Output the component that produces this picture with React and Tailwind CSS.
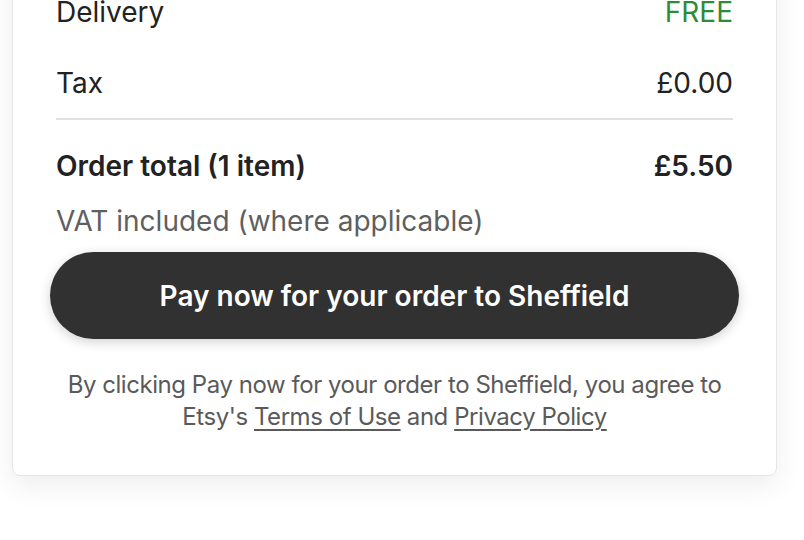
export default function App() {
  const font = { fontFamily: "Inter, 'Noto Sans', sans-serif" };
  return (
    <div className="w-[804px] h-[540px] bg-white overflow-hidden" style={font}>
      <div className="ml-[12px] w-[765px] -mt-[40px] pt-[33px] pb-[42px] px-[43px] bg-white rounded-lg border border-[#e6e6e6] shadow-[0_10px_28px_rgba(0,0,0,0.07)]">
        <div className="flex justify-between text-[28px] leading-[36px] text-[#222222]">
          <span>Delivery</span>
          <span className="text-[#2e8b37]">FREE</span>
        </div>
        <div className="mt-[35px] flex justify-between text-[28px] leading-[36px] text-[#222222]">
          <span>Tax</span>
          <span>£0.00</span>
        </div>
        <div className="mt-[17px] h-[2px] bg-[#e1e1e1]" />
        <div className="mt-[28px] flex justify-between text-[28px] leading-[36px] font-semibold text-[#222222]">
          <span>Order total (1 item)</span>
          <span>£5.50</span>
        </div>
        <div className="mt-[19px] text-[28px] leading-[36px] text-[#5f5f5f]">
          VAT included (where applicable)
        </div>
        <button className="mt-[13px] -mx-[6px] w-[calc(100%+12px)] h-[87px] rounded-full bg-[#313131] text-white text-[28px] font-semibold shadow-[0_3px_12px_rgba(0,0,0,0.18)]">
          Pay now for your order to Sheffield
        </button>
        <p className="mt-[30px] -mx-[20px] text-center text-[24px] leading-[32px] tracking-[-0.45px] whitespace-nowrap text-[#5a5a5a]">
          By clicking Pay now for your order to Sheffield, you agree to
          <br />
          Etsy's <span className="underline underline-offset-4">Terms of Use</span> and{" "}
          <span className="underline underline-offset-4">Privacy Policy</span>
        </p>
      </div>
    </div>
  );
}
